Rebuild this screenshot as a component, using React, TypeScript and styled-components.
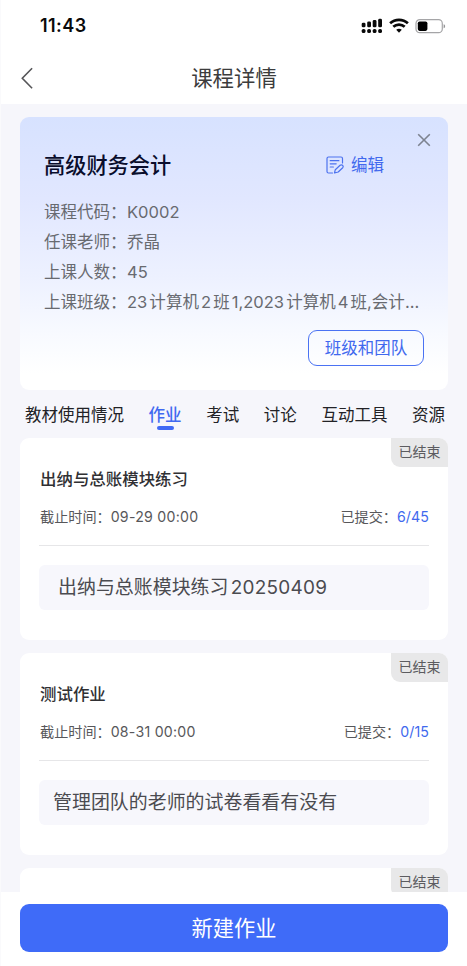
import React from 'react';
import styled, { createGlobalStyle } from 'styled-components';

const GlobalStyle = createGlobalStyle`
  * { box-sizing: border-box; }
  body {
    margin: 0;
    background: #f6f6fb;
    font-family: Inter, "Noto Sans CJK SC", sans-serif;
    overflow: hidden;
  }
  button { font-family: inherit; padding: 0; border: 0; background: none; }
`;

const Screen = styled.div`
  width: 467px;
  height: 966px;
  display: flex;
  flex-direction: column;
  overflow: hidden;
  background: #f6f6fb;
  border-left: 1px solid #fafafc;
  text-autospace: normal;
`;

const StatusBar = styled.div`
  flex: none;
  height: 51px;
  padding: 0 21px 0 39px;
  display: flex;
  align-items: center;
  justify-content: space-between;
  background: #fff;
`;

const Clock = styled.span`
  font-size: 18px;
  line-height: 24px;
  font-weight: 600;
  letter-spacing: 0.45px;
  color: #0a0a0a;
`;

const StatusIcons = styled.div`
  display: flex;
  align-items: center;
  gap: 6px;
  svg { display: block; }
`;

const NavBar = styled.header`
  flex: none;
  height: 53px;
  padding: 0 20px;
  display: grid;
  grid-template-columns: 40px 1fr 40px;
  align-items: center;
  background: #fff;
`;

const BackButton = styled.button`
  height: 24px;
  svg { display: block; }
`;

const NavTitle = styled.h1`
  margin: 0;
  text-align: center;
  font-size: 21.4px;
  line-height: 30px;
  font-weight: 400;
  color: #3c3c3c;
`;

const Content = styled.main`
  flex: 1;
  min-height: 0;
  overflow: hidden;
  padding: 13px 19px 0;
`;

const CourseCard = styled.section`
  position: relative;
  height: 273px;
  padding: 32px 24px 24px;
  border-radius: 9px;
  background: linear-gradient(180deg, #d7e2ff 0%, #e1e7ff 30%, #edf1ff 59%, #f8faff 80%, #ffffff 94%);
`;

const CloseButton = styled.button`
  position: absolute;
  top: 16px;
  right: 17px;
  svg { display: block; }
`;

const CourseHead = styled.div`
  height: 32px;
  padding-right: 40px;
  display: flex;
  align-items: center;
  justify-content: space-between;
`;

const CourseName = styled.h2`
  margin: 0;
  font-size: 21.2px;
  line-height: 32px;
  font-weight: 500;
  color: #090d2c;
`;

const EditButton = styled.button`
  display: flex;
  align-items: center;
  gap: 7px;
  font-size: 16.5px;
  line-height: 24px;
  color: #4169ee;
`;

const InfoList = styled.dl`
  margin: 16px 0 0;
  display: grid;
  grid-auto-rows: 30px;
`;

const InfoRow = styled.div`
  display: flex;
  font-size: 16.55px;
  line-height: 30px;
  color: #686a70;
`;

const InfoLabel = styled.dt`
  flex: none;
  width: 83px;
`;

const InfoValue = styled.dd`
  margin: 0;
  white-space: nowrap;
`;

const TightText = styled.span`
  display: inline-block;
  text-autospace: no-autospace;
`;

const CardActions = styled.div`
  margin-top: 13px;
  display: flex;
  justify-content: flex-end;
`;

const TeamButton = styled.button`
  width: 116px;
  height: 36px;
  border: 1.5px solid #4a72f3;
  border-radius: 9px;
  font-size: 16.5px;
  line-height: 34px;
  color: #4169ee;
`;

const Tabs = styled.nav`
  height: 48px;
  padding: 13px 3px 0 5px;
  display: flex;
  justify-content: space-between;
`;

const Tab = styled.a<{ $active?: boolean }>`
  display: flex;
  flex-direction: column;
  align-items: center;
  font-size: 16.5px;
  line-height: 24px;
  font-weight: ${(p) => (p.$active ? 500 : 400)};
  color: ${(p) => (p.$active ? '#4169f0' : '#222226')};
  &::after {
    content: '';
    width: 17px;
    height: 4px;
    margin-top: -1px;
    border-radius: 2px;
    background: ${(p) => (p.$active ? '#416af5' : 'transparent')};
  }
`;

const TaskList = styled.div`
  display: flex;
  flex-direction: column;
  gap: 13px;
`;

const TaskCard = styled.article`
  position: relative;
  flex: none;
  height: 202px;
  padding: 29px 19px 0;
  border-radius: 9px;
  background: #fff;
`;

const Badge = styled.span`
  position: absolute;
  top: 0;
  right: 0;
  width: 57px;
  height: 28.5px;
  border-radius: 0 9px 0 9px;
  background: #e8e8e9;
  text-align: center;
  font-size: 14px;
  line-height: 28px;
  color: #5c5c60;
`;

const TaskTitle = styled.h3`
  margin: 0;
  padding-left: 1px;
  font-size: 16.45px;
  line-height: 24px;
  font-weight: 500;
  color: #303033;
`;

const TaskMeta = styled.div`
  margin-top: 14px;
  height: 41px;
  border-bottom: 1.5px solid #e6e6e8;
  display: flex;
  justify-content: space-between;
  font-size: 14.15px;
  line-height: 24px;
  color: #57575a;
`;

const DueDate = styled.span`
  padding-left: 1px;
`;

const DateValue = styled.span`
  letter-spacing: 0.25px;
`;

const Count = styled.span`
  letter-spacing: 0.1px;
  color: #4169ee;
`;

const TaskItem = styled.div<{ $inset: number }>`
  margin-top: 19px;
  height: 45px;
  padding-left: ${(p) => p.$inset}px;
  border-radius: 6px;
  background: #f7f7fc;
  font-size: 18.95px;
  line-height: 46px;
  color: #4b4b50;
`;

const ItemNumber = styled.span`
  letter-spacing: 0.25px;
`;

const BottomBar = styled.footer`
  flex: none;
  height: 74px;
  padding: 12px 19px 0;
  background: #fff;
`;

const CreateButton = styled.button`
  width: 100%;
  height: 48px;
  border-radius: 9px;
  background: #3f6bf8;
  font-size: 21.2px;
  line-height: 48px;
  color: #fff;
`;

const SignalIcon = () => (
  <svg width="22" height="16" viewBox="0 0 22 16">
    {[0, 1, 2, 3].map((i) => (
      <g key={i} fill="#090909">
        <rect x={0.7 + i * 5.5} y={4.7 - i * 1.3} width="3.8" height={4.6 + i * 1.3} rx="1.4" />
        <rect x={0.7 + i * 5.5} y="11" width="3.8" height="4" rx="1.6" />
      </g>
    ))}
  </svg>
);

const WifiIcon = () => (
  <svg width="20" height="16" viewBox="0 0 20 16" fill="none" stroke="#090909" strokeWidth="2.7">
    <path d="M1.1 5.3C6 .7 14 .7 18.9 5.3" />
    <path d="M4.3 8.8c3.2-3 8.2-3 11.4 0" />
    <path d="M7.2 11.7c1.6-1.4 4-1.4 5.6 0L10 14.7z" fill="#090909" stroke="none" />
  </svg>
);

const BatteryIcon = () => (
  <svg width="31" height="16" viewBox="0 0 31 16">
    <rect x="1" y="1.7" width="26.3" height="13" rx="3.7" fill="none" stroke="#a5a5a7" strokeWidth="1.2" />
    <rect x="2.8" y="3.5" width="9.6" height="9.4" rx="1.8" fill="#000" />
    <path d="M28.6 6.2c2 .6 2 3.4 0 4z" fill="#949496" />
  </svg>
);

const BackIcon = () => (
  <svg width="12" height="24" viewBox="0 0 12 24" fill="none" stroke="#555558" strokeWidth="1.6">
    <path d="M11.1 2.2 1.3 12.2l9.8 10" />
  </svg>
);

const CloseIcon = () => (
  <svg width="14" height="14" viewBox="0 0 14 14" stroke="#7d8390" strokeWidth="1.6">
    <path d="m1.2 1.2 11.6 11.6M12.8 1.2 1.2 12.8" />
  </svg>
);

const EditIcon = () => (
  <svg width="18" height="18" viewBox="0 0 18 18" fill="none" stroke="#4c72ef" strokeWidth="1.2" strokeLinecap="round" strokeLinejoin="round">
    <path d="M6.500 17H2.500A1.500 1.500 0 0 1 1 15.500V2.500A1.500 1.500 0 0 1 2.500 1h12.500a1.500 1.500 0 0 1 1.500 1.500v4.500M4.200 4.700h8.700M4.200 7.800h6M4.200 11h3.200" />
    <path d="m9.300 13.700 4.800-4.400q1.300-1 2.500 0 1.100 1.200.1 2.400L12.200 16l-3.700 1z" />
  </svg>
);

const course: { label: string; value: string; tail?: string }[] = [
  { label: '课程代码：', value: 'K0002' },
  { label: '任课老师：', value: '乔晶' },
  { label: '上课人数：', value: '45' },
  { label: '上课班级：', value: '23计算机2班1,2023计算机4班', tail: ',会计...' },
];

const tabs = ['教材使用情况', '作业', '考试', '讨论', '互动工具', '资源'];

const tasks = [
  { title: '出纳与总账模块练习', due: '09-29 00:00', count: '6/45', item: '出纳与总账模块练习', number: '20250409', inset: 19 },
  { title: '测试作业', due: '08-31 00:00', count: '0/15', item: '管理团队的老师的试卷看看有没有', number: '', inset: 14 },
  { title: '', due: '', count: '', item: '', number: '', inset: 14 },
];

export default function App() {
  return (
    <Screen lang="zh-CN">
      <GlobalStyle />
      <StatusBar>
        <Clock>11:43</Clock>
        <StatusIcons>
          <SignalIcon />
          <WifiIcon />
          <BatteryIcon />
        </StatusIcons>
      </StatusBar>
      <NavBar>
        <BackButton aria-label="返回"><BackIcon /></BackButton>
        <NavTitle>课程详情</NavTitle>
      </NavBar>
      <Content>
        <CourseCard>
          <CloseButton aria-label="关闭"><CloseIcon /></CloseButton>
          <CourseHead>
            <CourseName>高级财务会计</CourseName>
            <EditButton><EditIcon />编辑</EditButton>
          </CourseHead>
          <InfoList>
            {course.map((row) => (
              <InfoRow key={row.label}>
                <InfoLabel>{row.label}</InfoLabel>
                <InfoValue>
                  {row.value}
                  {row.tail && <TightText>{row.tail}</TightText>}
                </InfoValue>
              </InfoRow>
            ))}
          </InfoList>
          <CardActions><TeamButton>班级和团队</TeamButton></CardActions>
        </CourseCard>
        <Tabs>
          {tabs.map((name) => (
            <Tab key={name} $active={name === '作业'}>{name}</Tab>
          ))}
        </Tabs>
        <TaskList>
          {tasks.map((task, i) => (
            <TaskCard key={i}>
              <Badge>已结束</Badge>
              {task.title && (
                <>
                  <TaskTitle>{task.title}</TaskTitle>
                  <TaskMeta>
                    <DueDate>截止时间：<DateValue>{task.due}</DateValue></DueDate>
                    <span>已提交：<Count>{task.count}</Count></span>
                  </TaskMeta>
                  <TaskItem $inset={task.inset}>
                    {task.item}
                    {task.number && <ItemNumber>{task.number}</ItemNumber>}
                  </TaskItem>
                </>
              )}
            </TaskCard>
          ))}
        </TaskList>
      </Content>
      <BottomBar><CreateButton>新建作业</CreateButton></BottomBar>
    </Screen>
  );
}
